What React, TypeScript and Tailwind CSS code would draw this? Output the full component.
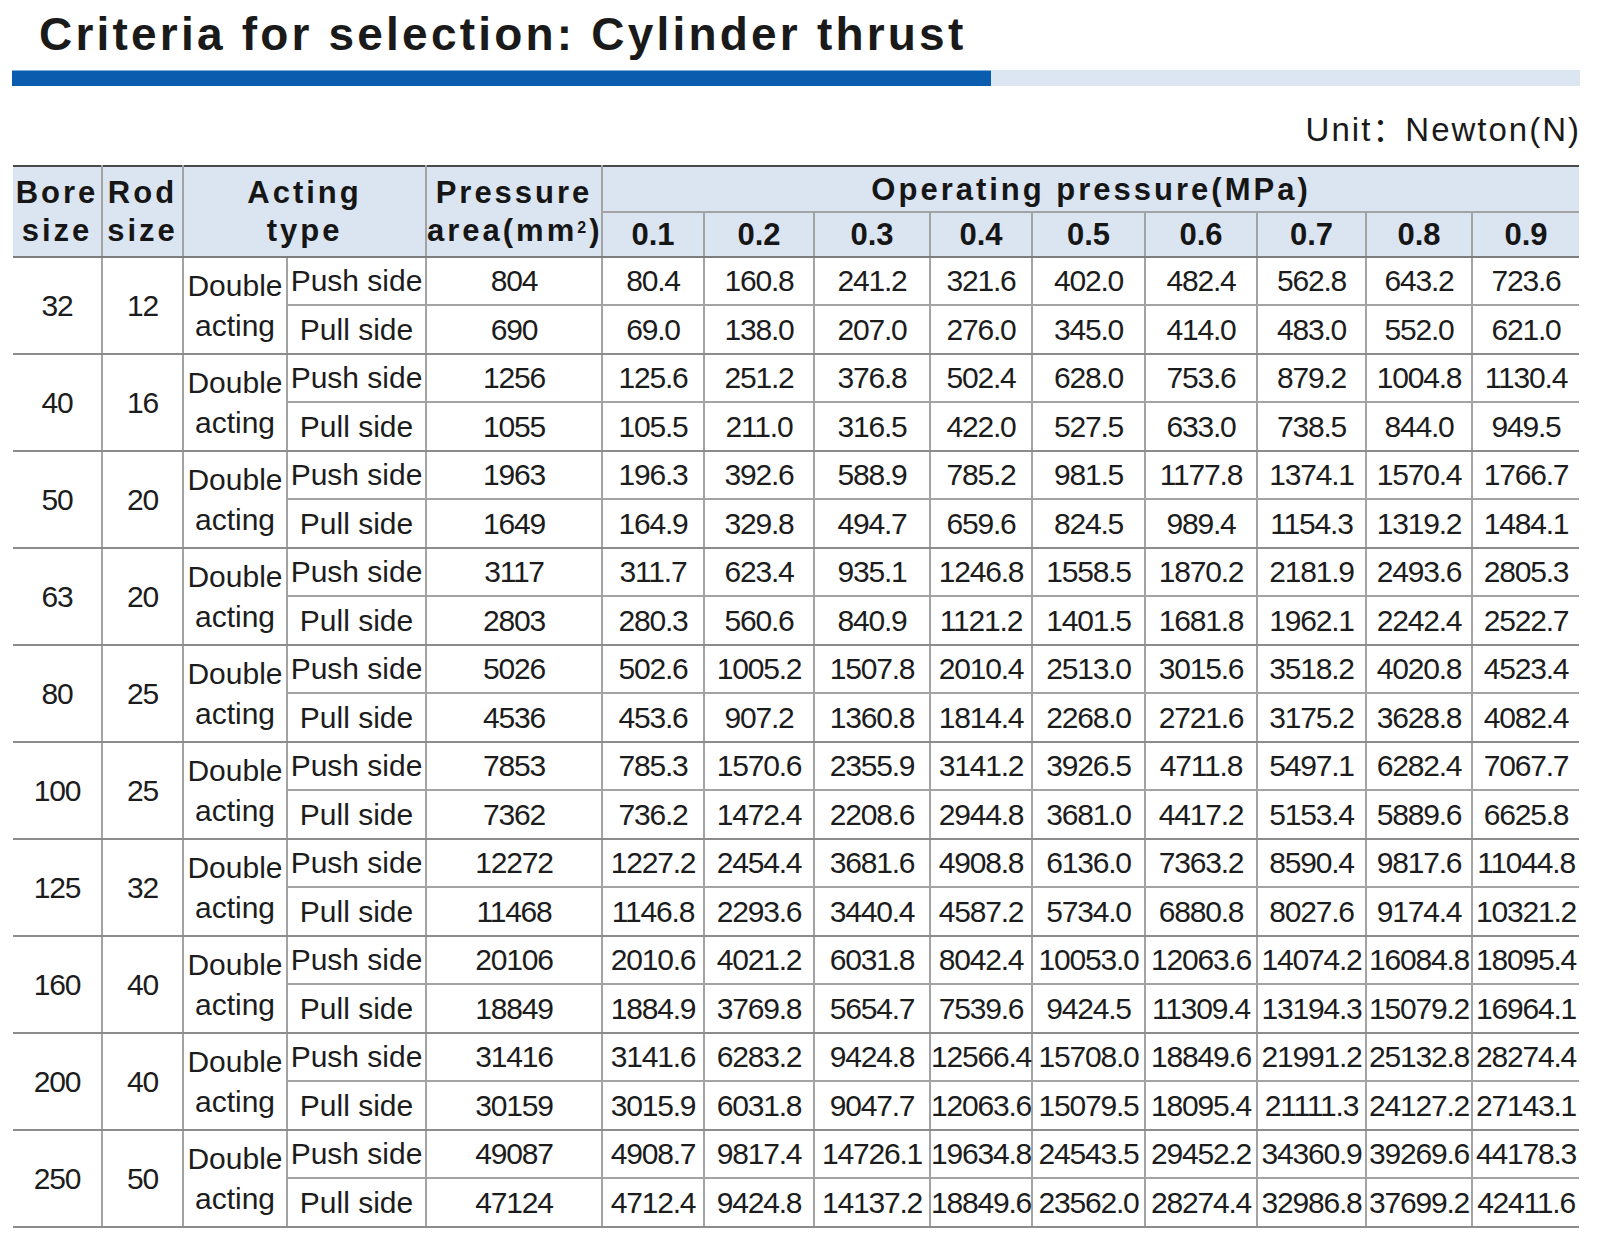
import React from "react";

type Group = {
  bore: number;
  rod: number;
  push: number;
  pull: number;
};

const groups: Group[] = [
  { bore: 32, rod: 12, push: 804, pull: 690 },
  { bore: 40, rod: 16, push: 1256, pull: 1055 },
  { bore: 50, rod: 20, push: 1963, pull: 1649 },
  { bore: 63, rod: 20, push: 3117, pull: 2803 },
  { bore: 80, rod: 25, push: 5026, pull: 4536 },
  { bore: 100, rod: 25, push: 7853, pull: 7362 },
  { bore: 125, rod: 32, push: 12272, pull: 11468 },
  { bore: 160, rod: 40, push: 20106, pull: 18849 },
  { bore: 200, rod: 40, push: 31416, pull: 30159 },
  { bore: 250, rod: 50, push: 49087, pull: 47124 },
];

const pressures = [1, 2, 3, 4, 5, 6, 7, 8, 9];

// area (mm2) x pressure (MPa) = thrust (N); integer math keeps toFixed honest
const thrust = (area: number, k: number) => ((area * k) / 10).toFixed(1);

const colWidths = [
  "w-[89px]",
  "w-[81px]",
  "w-[104px]",
  "w-[139px]",
  "w-[176px]",
  "w-[102px]",
  "w-[110px]",
  "w-[116px]",
  "w-[102px]",
  "w-[113px]",
  "w-[112px]",
  "w-[109px]",
  "w-[106px]",
  "w-[107px]",
];

const FONT = "font-['Liberation_Sans',Arial,sans-serif]";

const cell = "border-2 border-[#a3a3a3] p-0 text-center align-middle";
const head =
  "border-2 border-[#a3a3a3] border-t-[#4a4a4a] border-b-[#7d7d7d] bg-[#dbe5f1] p-0 text-center align-middle font-bold text-[31px] leading-[38px] tracking-[3px] text-[#161616]";
const num = "tracking-[-1.2px]";

const GroupRows: React.FC<{ g: Group }> = ({ g }) => {
  const groupEnd = "border-b-[#8c8c8c]";
  return (
    <>
      <tr className="h-[48px]">
        <td rowSpan={2} className={`${cell} ${groupEnd} border-l-0 ${num}`}>
          {g.bore}
        </td>
        <td rowSpan={2} className={`${cell} ${groupEnd} ${num}`}>
          {g.rod}
        </td>
        <td rowSpan={2} className={`${cell} ${groupEnd} leading-[40px]`}>
          Double
          <br />
          acting
        </td>
        <td className={cell}>Push side</td>
        <td className={`${cell} ${num}`}>{g.push}</td>
        {pressures.map((k, i) => (
          <td
            key={k}
            className={`${cell} ${num} ${i === pressures.length - 1 ? "border-r-0" : ""}`}
          >
            {thrust(g.push, k)}
          </td>
        ))}
      </tr>
      <tr className="h-[49px]">
        <td className={`${cell} ${groupEnd}`}>Pull side</td>
        <td className={`${cell} ${groupEnd} ${num}`}>{g.pull}</td>
        {pressures.map((k, i) => (
          <td
            key={k}
            className={`${cell} ${groupEnd} ${num} ${i === pressures.length - 1 ? "border-r-0" : ""}`}
          >
            {thrust(g.pull, k)}
          </td>
        ))}
      </tr>
    </>
  );
};

export default function App() {
  return (
    <div className={`h-[1240px] w-[1600px] overflow-hidden bg-white text-[#1c1c1c] ${FONT}`}>
      <div className="h-[70px] pt-[11px] pl-[39px]">
        <h1 className="text-[46px] leading-[46px] font-bold tracking-[3.2px] text-[#1a1a1a]">
          Criteria for selection: Cylinder thrust
        </h1>
      </div>

      <div className="ml-[12px] flex h-[16px] w-[1568px]">
        <div className="h-full w-[979px] border-t border-[#7fb0e2] bg-[#0a5cae]" />
        <div className="h-full flex-1 bg-[#dce6f3]" />
      </div>

      <div className="h-[79px] pt-[25px] pr-[19px] text-right text-[33px] leading-[33px] tracking-[2px] text-[#1a1a1a]">
        Unit
        <span className="font-['Noto_Sans_CJK_SC',sans-serif] tracking-normal">：</span>
        Newton(N)
      </div>

      <table className="ml-[13px] w-[1566px] table-fixed border-collapse text-[30px] leading-none">
        <colgroup>
          {colWidths.map((w, i) => (
            <col key={i} className={w} />
          ))}
        </colgroup>
        <thead>
          <tr className="h-[46px]">
            <th rowSpan={2} className={`${head} border-l-0`}>
              Bore
              <br />
              size
            </th>
            <th rowSpan={2} className={head}>
              Rod
              <br />
              size
            </th>
            <th rowSpan={2} colSpan={2} className={head}>
              Acting
              <br />
              type
            </th>
            <th rowSpan={2} className={head}>
              Pressure
              <br />
              area(mm<sup className="text-[16px]">2</sup>)
            </th>
            <th colSpan={9} className={`${head} border-r-0 border-b-[#a3a3a3] leading-none`}>
              Operating pressure(MPa)
            </th>
          </tr>
          <tr className="h-[45px]">
            {pressures.map((k, i) => (
              <th
                key={k}
                className={`${head} border-t-[#a3a3a3] tracking-normal leading-none ${i === pressures.length - 1 ? "border-r-0" : ""}`}
              >
                {(k / 10).toFixed(1)}
              </th>
            ))}
          </tr>
        </thead>
        <tbody>
          {groups.map((g) => (
            <GroupRows key={g.bore} g={g} />
          ))}
        </tbody>
      </table>
    </div>
  );
}
